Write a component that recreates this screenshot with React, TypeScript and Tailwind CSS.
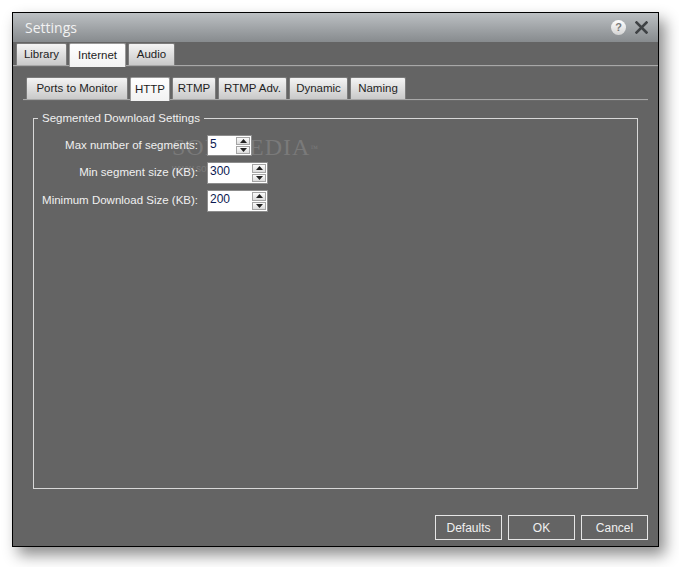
import React from "react"

const font = { fontFamily: '"Liberation Sans", Arial, sans-serif' }

function Tab({ label, active, w }: { label: string; active?: boolean; w: string }) {
  return (
    <div
      className={`${w} flex items-center justify-center rounded-t-[2px] border border-b-0 text-[11.5px] text-[#1e1e1e] ${
        active
          ? "relative z-10 h-[24px] -mb-[2px] border-[#9a9a9a] bg-gradient-to-b from-[#ffffff] to-[#f2f2f2]"
          : "h-[22px] border-[#7c7c7c] bg-gradient-to-b from-[#f4f4f4] to-[#c9c9c9]"
      }`}
    >
      {label}
    </div>
  )
}

function Spinner({ value, w, h }: { value: string; w: string; h: string }) {
  return (
    <div className={`${w} ${h} flex border border-[#8d8d8d] bg-white`}>
      <div className="flex-1 pl-[2px] pt-[1px] text-[12px] leading-[15px] text-[#0c1a52]">{value}</div>
      <div className="flex w-[16px] flex-col gap-[1px] p-[1px]">
        {[0, 1].map((i) => (
          <div
            key={i}
            className="flex flex-1 items-center justify-center border border-[#a5a5a5] bg-gradient-to-b from-[#fbfbfb] to-[#dcdcdc]"
          >
            <svg width="7" height="4" viewBox="0 0 7 4">
              {i === 0 ? <path d="M0 4 L3.5 0 L7 4 Z" fill="#222" /> : <path d="M0 0 L3.5 4 L7 0 Z" fill="#222" />}
            </svg>
          </div>
        ))}
      </div>
    </div>
  )
}

function Button({ label }: { label: string }) {
  return (
    <div className="flex h-[25px] w-[67px] items-center justify-center border border-[#e6e6e6] text-[12px] text-[#f0f0f0]">
      {label}
    </div>
  )
}

export default function App() {
  return (
    <div className="h-[567px] w-[679px] bg-white pl-[12px] pt-[12px]" style={font}>
      <div className="flex h-[535px] w-[647px] flex-col border border-black bg-[#646464] shadow-[6px_8px_14px_rgba(0,0,0,0.45)]">
        {/* title bar */}
        <div className="flex h-[29px] items-center justify-between bg-gradient-to-b from-[#bcc0c3] to-[#878b8e] pl-[12px] pr-[10px]">
          <span className="text-[14px] text-[#f2f2f2]" style={{ fontFamily: '"Open Sans", "Liberation Sans", sans-serif' }}>
            Settings
          </span>
          <div className="flex items-center gap-[9px]">
            <div className="flex h-[15px] w-[15px] items-center justify-center rounded-full bg-gradient-to-b from-[#ffffff] to-[#d4d4d4] text-[11px] font-bold leading-none text-[#7a7a7a]">
              ?
            </div>
            <svg width="13" height="13" viewBox="0 0 13 13">
              <path d="M1.5 1.5 L11.5 11.5 M11.5 1.5 L1.5 11.5" stroke="#3f4245" strokeWidth="2.6" strokeLinecap="square" />
            </svg>
          </div>
        </div>

        {/* top tabs */}
        <div className="flex gap-[2px] pl-[3px] pt-[1px]">
          <Tab label="Library" w="w-[51px]" />
          <Tab label="Internet" w="w-[57px]" active />
          <Tab label="Audio" w="w-[47px]" />
        </div>
        <div className="h-[2px] border-t border-[#a8a8a8] bg-[#6e6e6e]" />

        <div className="flex flex-1 flex-col px-[10px]">
          {/* sub tabs */}
          <div className="mt-[10px] flex gap-[2px] pl-[3px]">
            <Tab label="Ports to Monitor" w="w-[102px]" />
            <Tab label="HTTP" w="w-[40px]" active />
            <Tab label="RTMP" w="w-[44px]" />
            <Tab label="RTMP Adv." w="w-[69px]" />
            <Tab label="Dynamic" w="w-[59px]" />
            <Tab label="Naming" w="w-[56px]" />
          </div>
          <div className="h-[2px] border-t border-[#a8a8a8] bg-[#6a6a6a]" />

          {/* group box */}
          <div className="relative mx-[10px] mt-[17px] h-[371px] border border-[#d8d8d8]">
            <span className="absolute -top-[8px] left-[4px] bg-[#646464] px-[4px] text-[11.5px] leading-[14px] text-[#f0f0f0]">
              Segmented Download Settings
            </span>
            <span
              className="pointer-events-none absolute left-[138px] top-[10px] text-[24px] tracking-[1px] text-[#8a8a8a] opacity-60"
              style={{ fontFamily: '"Liberation Serif", serif' }}
            >
              SOFTPEDIA<sup className="text-[8px]">™</sup>
            </span>
            <span className="pointer-events-none absolute left-[138px] top-[42px] text-[10px] text-[#858585] opacity-70">
              www.softpedia.com
            </span>
            <div className="relative flex flex-col pt-[16px]">
              {[
                { l: "Max number of segments:", v: "5", w: "w-[45px]", h: "h-[21px]" },
                { l: "Min segment size (KB):", v: "300", w: "w-[61px]", h: "h-[22px]" },
                { l: "Minimum Download Size (KB):", v: "200", w: "w-[61px]", h: "h-[22px]" },
              ].map((r, i) => (
                <div key={r.l} className={`flex items-center ${i === 0 ? "" : "mt-[6px]"}`}>
                  <span className="w-[164px] text-right text-[11.5px] text-[#f0f0f0]">{r.l}</span>
                  <div className="ml-[9px]">
                    <Spinner value={r.v} w={r.w} h={r.h} />
                  </div>
                </div>
              ))}
            </div>
          </div>

          {/* buttons */}
          <div className="mt-[26px] flex justify-end gap-[6px]">
            <Button label="Defaults" />
            <Button label="OK" />
            <Button label="Cancel" />
          </div>
        </div>
      </div>
    </div>
  )
}
